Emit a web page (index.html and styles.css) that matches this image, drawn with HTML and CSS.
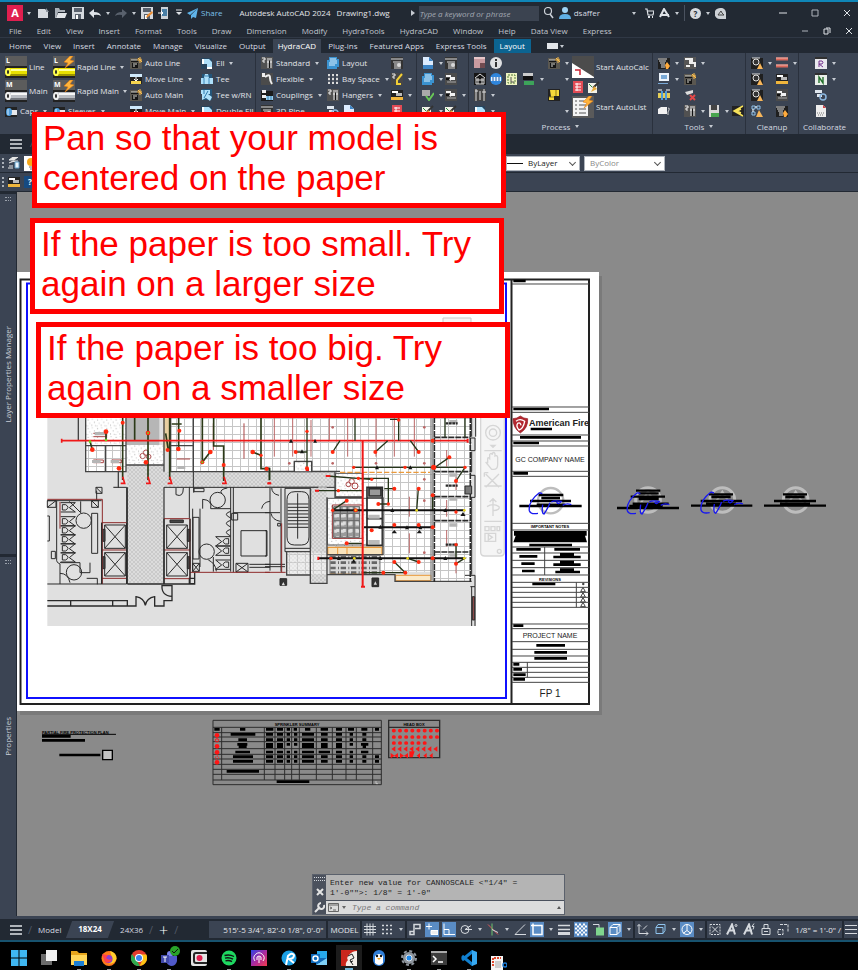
FILE: index.html
```html
<!DOCTYPE html>
<html lang="en">
<head>
<meta charset="utf-8">
<title>Autodesk AutoCAD 2024 - Drawing1.dwg</title>
<link rel="stylesheet" href="styles.css">
</head>
<body>
<svg class="sprite" aria-hidden="true">
  <symbol id="pipe-y" viewBox="0 0 22 22"><path fill="#5c5c5c" d="M0 0h22v12H0z"/><path fill="#222" d="M0 10h22v12H0z"/><path fill="#e8e000" d="M2 12h20v8H2z"/><path fill="#ffff9a" d="M6 13h16v2H6z"/><path fill="#9c9400" d="M5 18h17v2H5z"/><ellipse cx="3" cy="16" rx="3" ry="4" fill="#ffff50"/><ellipse cx="3" cy="16" rx="1" ry="2" fill="#222"/></symbol>
  <symbol id="pipe-w" viewBox="0 0 22 22"><path fill="#5c5c5c" d="M0 0h22v12H0z"/><path fill="#222" d="M0 10h22v12H0z"/><path fill="#b9bcc2" d="M2 12h20v8H2z"/><path fill="#f6f6f6" d="M6 13h16v2H6z"/><path fill="#74777e" d="M5 18h17v2H5z"/><ellipse cx="3" cy="16" rx="3" ry="4" fill="#eee"/><ellipse cx="3" cy="16" rx="1" ry="2" fill="#222"/></symbol>
  <symbol id="bolt" viewBox="0 0 22 22"><path d="M17 0L11 6l4 1-3 5 9-7-4-1 3-4z" fill="#ffb43c" stroke="#e07a10" stroke-width=".6"/></symbol>
  <symbol id="auto" viewBox="0 0 12 12"><path fill="#5a5750" d="M0 1h12v11H0z"/><path d="M1 3h7v2H1zM2 6h6v5H2z" fill="#151515"/><path d="M1 3h6M3 7h4M3 9h2" stroke="#d8d8d0"/><path d="M10 0v6M7 3h5M8 1l4 4" stroke="#ffc04c"/></symbol>
  <symbol id="move" viewBox="0 0 12 12"><path fill="#222" d="M0 1h12v10H0z"/><path fill="#cfe9fb" d="M0 1h12v3H0z"/><path fill="#f3d34e" d="M1 8h10v3H1z"/><path d="M6 4v4M4 6l2 2 2-2" stroke="#fff" fill="none"/></symbol>
  <symbol id="ell" viewBox="0 0 12 12"><path fill="#27455e" d="M0 1h11v11H0z"/><path fill="#aee0fa" d="M1 2h7l3 3v7H6V7H1z"/><path fill="#fff" d="M1 2h2v5H1zM6 10h5v2H6z"/></symbol>
  <symbol id="tee" viewBox="0 0 12 12"><path fill="#235579" d="M1 1h10v10H1z"/><path fill="#aee0fa" d="M0 5h3l1-4h3l1 4h4v6H0z"/><path d="M3 5v6M8 5v6M4 3h4" stroke="#3e87b8"/></symbol>
  <symbol id="teern" viewBox="0 0 12 12"><path fill="#235579" d="M1 0h10v11H1z"/><path fill="#aee0fa" d="M0 1h9v4H7l4 3-2 4-4-3-4 2V5H0z"/><path d="M3 1v4M7 2l-4 7" stroke="#2d78ab"/></symbol>
  <symbol id="fit" viewBox="0 0 12 12"><path fill="#515151" d="M0 0h12v12H0z"/><path d="M1 1h3v2H2v2h2M6 2h5M6 5h5M7 3v8M10 3v8" stroke="#f1f1f1" fill="none"/><path fill="#111" d="M8 4h1v7H8z"/></symbol>
  <symbol id="hose" viewBox="0 0 12 12"><path fill="#4b4b4b" d="M0 0h12v12H0z"/><path d="M1 1h3M1 3h3M4 4q5-4 5 1 0 3 2 6" stroke="#eee" fill="none" stroke-width="2"/></symbol>
  <symbol id="coup" viewBox="0 0 12 12"><path fill="#1b1b1b" d="M0 2h12v10H0z"/><path d="M1 1h4v3H1zM1 6h4v3H1z" fill="#eee"/><path fill="#9ad0f0" d="M5 7h7v4H5z"/><path d="M7 7v4M10 7v4" stroke="#367eae"/></symbol>
  <symbol id="cap" viewBox="0 0 12 12"><path fill="#222" d="M0 2h12v10H0z"/><path fill="#e7e9ec" d="M5 5h7v5H5z"/><ellipse cx="4" cy="7" rx="3" ry="4" fill="#4f9ddb"/><path d="M3 4v6" stroke="#d5ecff"/></symbol>
  <symbol id="sheet" viewBox="0 0 12 12"><path fill="#3a92d0" d="M2 0h8v2h2v8h-2v2H0V3h2z"/><path d="M3 2h6M3 4h7M2 6h8M2 8h6" stroke="#ddf1ff"/></symbol>
  <symbol id="bays" viewBox="0 0 12 12"><path d="M1 2h10M1 6h10M1 10h10" stroke="#f2f2f2" stroke-width="2" stroke-dasharray="2 2"/><path d="M2 1v10M6 1v10M10 1v10" stroke="#aaa" stroke-width=".6"/></symbol>
  <symbol id="grill" viewBox="0 0 12 12"><path fill="#333" d="M0 0h12v12H0z"/><path d="M0 2h12M2 5h8M3 7h7M3 9h7M3 11h7" stroke="#dedede"/><circle cx="8" cy="8" r="2" fill="#d8d8d8"/></symbol>
  <symbol id="page" viewBox="0 0 12 12"><path fill="#dcecff" d="M1 0h6l4 4v7H1z"/><path fill="#3d85c6" d="M7 0l4 4H7zM1 8h10v4H1z"/></symbol>
  <symbol id="duck" viewBox="0 0 12 12"><path fill="#4b4b4b" d="M0 0h12v12H0z"/><path fill="#f2f2f2" d="M1 2h5v2H1zM5 4h5v3H5z"/><path d="M2 9h9M3 5l3 3" stroke="#aaa"/><path fill="#111" d="M1 5h3v2H1z"/></symbol>
  <symbol id="sprk" viewBox="0 0 12 12"><path fill="#474747" d="M0 0h12v12H0z"/><path d="M1 1h3v2H2v2h2" stroke="#eee" fill="none"/><path d="M11 1L6 7v4h4" stroke="#f2cf36" stroke-width="2" fill="none"/></symbol>
  <symbol id="tape" viewBox="0 0 12 12"><path fill="#222" d="M0 1h12v10H0z"/><path fill="#fff" d="M1 2h6v2H1z"/><path fill="#f0b63c" d="M0 8h12v3H0z"/><path fill="#b9b9b9" d="M5 4h6v3H5z"/></symbol>
  <symbol id="check" viewBox="0 0 12 12"><path fill="#aaa" d="M0 1h8v6H0z"/><path d="M4 7l3 4 5-7" stroke="#68c657" stroke-width="2" fill="none"/></symbol>
  <symbol id="pink" viewBox="0 0 12 12"><path fill="#c99ba0" d="M0 0h11v11H0z"/><path fill="#704b50" d="M6 6h5v5H6z"/><path fill="#e6c6c9" d="M0 0h11v2H0z"/></symbol>
  <symbol id="info" viewBox="0 0 12 12"><circle cx="6" cy="6" r="6" fill="#dfe0e2"/><path d="M6 2v2M6 5v5" stroke="#333" stroke-width="2"/></symbol>
  <symbol id="home" viewBox="0 0 12 12"><path fill="#151515" d="M0 0h12v12H0z"/><path d="M1 5l5-4 5 4M2 5v6h8V5M2 7h8M4 5v6M8 5v6" stroke="#ddd" fill="none"/></symbol>
  <symbol id="n123" viewBox="0 0 12 12"><circle cx="6" cy="6" r="6" fill="#2f86dd"/><path fill="#e8f3ff" d="M1 4h10v4H1z"/><path d="M3 4v4M5 5h2M5 7h2M9 4v4" stroke="#1a58a3"/></symbol>
  <symbol id="plan" viewBox="0 0 12 12"><path fill="#eef3c0" d="M0 0h11v12H0z"/><path d="M2 2h7v8H2z" fill="none" stroke="#557c3a" stroke-dasharray="2 1"/><path d="M5 4v5h3" stroke="#555" fill="none"/></symbol>
  <symbol id="calc" viewBox="0 0 12 12"><path fill="#ccc" d="M1 0h10v3H1z"/><path fill="#111" d="M1 3h10v4H1z"/><path fill="#3da35a" d="M2 8h10v4H2z"/></symbol>
  <symbol id="tools2" viewBox="0 0 12 12"><path fill="#444" d="M0 0h12v12H0z"/><path d="M2 0v12M6 2v9M10 0v12M1 2h3M8 3h4" stroke="#ddd"/></symbol>
  <symbol id="tag" viewBox="0 0 12 12"><path fill="#222" d="M0 0h12v12H0z"/><path fill="#f4d83b" d="M2 1h9v6H6v4H1V8h2z"/><path d="M1 8h5M8 1v6" stroke="#8f7c12"/></symbol>
  <symbol id="redl" viewBox="0 0 12 12"><path fill="#e24b55" d="M1 0h10v12H1z"/><path d="M3 3h6M3 6h6M3 9h6M5 2v8" stroke="#fff"/></symbol>
  <symbol id="brush" viewBox="0 0 12 12"><path fill="#f2f2e8" d="M0 2h9v10H0z"/><path d="M11 1L5 7" stroke="#333" stroke-width="2"/><path fill="#e8ab3b" d="M6 5l3 3-6 3z"/><path d="M1 3l3 3" stroke="#2b8a3a"/></symbol>
  <symbol id="screen" viewBox="0 0 12 12"><path fill="#ecf3fa" d="M1 0h10v8H1z"/><path fill="#79a9d6" d="M3 2h6v4H3zM0 10h10v1H0z"/></symbol>
  <symbol id="flange" viewBox="0 0 12 12"><path fill="#e4ce55" d="M0 4h12v5H0z"/><path fill="#4c9bd8" d="M3 2h2v9H3zM7 2h2v9H7z"/><path d="M0 1h4M8 1h4" stroke="#fff"/></symbol>
  <symbol id="tap" viewBox="0 0 12 12"><path fill="#1f1f1f" d="M0 1h12v11H0z"/><path d="M0 2h9M1 4h7M2 6h5M3 8h4M3 10h4" stroke="#ddd" fill="none"/><path fill="#ffab3d" d="M7 8l2-3 3 4-2 3H8z"/></symbol>
  <symbol id="warn" viewBox="0 0 12 12"><path fill="#1f1f1f" d="M0 1h12v11H0z"/><circle cx="5" cy="5" r="3" fill="#333" stroke="#e2e2e2"/><path d="M1 1h8" stroke="#ddd"/><path fill="#f7b65b" d="M9 6l3 6H6z"/></symbol>
  <symbol id="zig" viewBox="0 0 12 12"><path fill="#555" d="M0 0h12v12H0z"/><path d="M1 2h5v4h5v4M8 1v4M2 9h4" stroke="#eee" fill="none" stroke-width="2"/></symbol>
  <symbol id="cross" viewBox="0 0 12 12"><path d="M1 3l8-2v3L3 6z" fill="#ddd"/><path d="M6 6l5 5M11 6l-5 5" stroke="#e54848" stroke-width="2"/></symbol>
  <symbol id="disk" viewBox="0 0 12 12"><path fill="#d8d8d8" d="M1 0h10v12H1z"/><path fill="#444" d="M3 0h6v5H3z"/><path fill="#47a44f" d="M3 8h8v4H3z"/></symbol>
  <symbol id="cube" viewBox="0 0 12 12"><path fill="#f2f2f2" d="M0 4l3-2h6v7H0z"/><path d="M10 3q2 0 1 2l-1 2v3" stroke="#ccc" fill="none"/></symbol>
  <symbol id="redpipes" viewBox="0 0 12 12"><path stroke="#d8675b" stroke-width="3" d="M0 2h12M0 9h12"/><path d="M0 1h12M0 8h12" stroke="#efb7ae"/></symbol>
  <symbol id="sheetr" viewBox="0 0 12 12"><path fill="#e9e9ee" d="M0 1h12v11H0z"/><path fill="#303030" d="M0 0h12v2H0z"/><path d="M4 10V4h3q2 1 0 3H4l4 3" stroke="#74328e" fill="none"/></symbol>
  <symbol id="sheetn" viewBox="0 0 12 12"><path fill="#e9eee9" d="M0 1h12v11H0z"/><path fill="#303030" d="M0 0h12v2H0z"/><path d="M4 10V4l4 6V4" stroke="#23712c" fill="none" stroke-width="1.4"/></symbol>
  <symbol id="gears" viewBox="0 0 12 12"><path fill="#dfe6ee" d="M0 1h7v3H0zM2 5h5v3H2z"/><circle cx="8" cy="8" r="3" fill="none" stroke="#8ab6df" stroke-width="1.5"/></symbol>
  <symbol id="boxes" viewBox="0 0 12 12"><path d="M1 1h3v3H1zM6 1h3v3H6zM1 7h3v3H1z" fill="none" stroke="#8fc0ea"/><path d="M4 2h2M2 4v3" stroke="#fff"/><path fill="#f7b65b" d="M8 5l4 7H5z"/></symbol>
  <symbol id="pdf" viewBox="0 0 12 12"><path fill="#ededed" d="M1 0h7l3 3v9H1z"/><path fill="#d33f45" d="M8 0l3 3H8z"/><path d="M2 8h8M3 10h6" stroke="#777" stroke-dasharray="1 1"/></symbol>
  <symbol id="wave" viewBox="0 0 12 12"><path fill="#222" d="M0 1h12v10H0z"/><path d="M11 1L2 6l9 5M9 4L5 6l4 2" fill="none" stroke="#f6e25a" stroke-width="1.5"/></symbol>
  <symbol id="bars" viewBox="0 0 12 10"><path d="M0 1h12M0 5h12M0 9h12" stroke="#dfe3e8" stroke-width="1.4"/></symbol>
  <symbol id="floppy" viewBox="0 0 12 12"><path fill="#d5d9de" d="M0 0h12v12H0z"/><path fill="#59616d" d="M2 1h8v4H2zM3 7h6v5H3z"/><path fill="#fff" d="M4 8h2v4H4z"/></symbol>
</svg>

<header class="titlebar">
  <button class="applogo" aria-label="Application menu">A</button>
  <i class="caret"></i>
  <nav class="quick">
    <svg width="12" height="12" viewBox="0 0 12 12"><path d="M0 2h7l3 3v6H0z" fill="#d5d9de"/><path d="M8 1l3 4H8z" fill="#9097a0"/></svg>
    <svg width="12" height="12" viewBox="0 0 12 12"><path d="M0 1h4l1 2h5v2H3L1 11H0z" fill="#aab0b8"/><path d="M3 6h9l-2 5H1z" fill="#e3e6ea"/></svg>
    <svg width="12" height="12"><use href="#floppy"/></svg>
    <svg width="12" height="12" viewBox="0 0 12 12"><path d="M0 6l5-4v3q6 0 7 4-3-2-7-1v3z" fill="#dfe3e8"/></svg>
    <i class="caret"></i>
    <svg width="12" height="12" viewBox="0 0 12 12"><path d="M12 6L7 2v3Q1 5 0 9q3-2 7-1v3z" fill="#59616d"/></svg>
    <i class="caret"></i>
    <svg width="12" height="12" viewBox="0 0 12 12"><use href="#floppy"/><path d="M5 11l1-3 5-4 1 2-5 4z" fill="#ed8f35"/></svg>
    <svg width="12" height="12" viewBox="0 0 12 12"><path d="M3 0h7v12H3z" fill="#ccd1d7"/><path d="M4 2h5v7H4z" fill="#4a7fa6"/><path d="M0 6h5M3 4l2 2-2 2" stroke="#fff" fill="none"/></svg>
    <svg width="8" height="8" viewBox="0 0 8 8"><path d="M1 1h6" stroke="#dfe3e8"/><path d="M1 3h6L4 6z" fill="#dfe3e8"/></svg>
  </nav>
  <a class="share" href="#"><svg width="11" height="11" viewBox="0 0 11 11"><path d="M11 0L0 5l3 2zM11 0L4 7v4l2-2 3 1z" fill="#5fb4ea"/></svg>Share</a>
  <h1>Autodesk AutoCAD 2024 <span>Drawing1.dwg</span></h1>
  <i class="play"></i>
  <input class="search" type="search" aria-label="Search help" placeholder="Type a keyword or phrase">
  <svg width="11" height="12" viewBox="0 0 11 12"><circle cx="5" cy="4" r="3.5" fill="none" stroke="#cdd2d9" stroke-width="1.2"/><path d="M7 7l3 4" stroke="#cdd2d9" stroke-width="1.6"/></svg>
  <button class="user"><svg width="12" height="12" viewBox="0 0 12 12"><circle cx="6" cy="3" r="3" fill="#9fd3f5"/><path d="M0 12q0-5 6-5t6 5z" fill="#5fb0e6"/></svg>dsaffer</button>
  <i class="caret"></i>
  <div class="help">
    <svg width="9" height="11" viewBox="0 0 9 11"><path d="M0 1h2l1 6h5l1-4H2" fill="none" stroke="#dfe3e8" stroke-width="1.2"/><path d="M3 9h2M7 9h1" stroke="#dfe3e8" stroke-width="2"/></svg>
    <svg width="11" height="11" viewBox="0 0 11 11"><path d="M1 9L5 1l5 8M1 7h9" fill="none" stroke="#dfe3e8" stroke-width="2"/></svg>
    <i class="caret"></i>
    <i class="rule"></i>
    <button class="round" aria-label="Help">?</button>
    <i class="caret"></i>
    <svg width="11" height="11" viewBox="0 0 11 11"><path d="M5 0a5 5 0 0 1 6 5v6H5A5 5 0 0 1 5 0z" fill="#cdd1d6"/><path d="M3 7l3-4 1 2 2 2z" fill="none" stroke="#444"/></svg>
  </div>
  <div class="winbtns">
    <button aria-label="Minimize"><svg width="8" height="8"><path d="M0 4h8" stroke="#dfe3e8"/></svg></button>
    <button aria-label="Maximize"><svg width="8" height="8"><path d="M1 1h6v6H1z" stroke="#aeb4bc" fill="none"/></svg></button>
    <button aria-label="Close"><svg width="8" height="8"><path d="M1 1l6 6M7 1L1 7" stroke="#dfe3e8"/></svg></button>
  </div>
</header>

<div class="menubar">
  <nav class="menu"><a>File</a><a>Edit</a><a>View</a><a>Insert</a><a>Format</a><a>Tools</a><a>Draw</a><a>Dimension</a><a>Modify</a><a>HydraTools</a><a>HydraCAD</a><a>Window</a><a>Help</a><a>Data View</a><a>Express</a></nav>
  <div class="winbtns inner">
    <button aria-label="Minimize drawing"><svg width="8" height="8"><path d="M1 4h6" stroke="#aeb4bc"/></svg></button>
    <button aria-label="Restore drawing"><svg width="8" height="8"><path d="M1 2h4v5H1zM3 1h4v5" stroke="#dfe3e8" fill="none"/></svg></button>
    <button aria-label="Close drawing"><svg width="8" height="8"><path d="M1 1l6 6M7 1L1 7" stroke="#dfe3e8"/></svg></button>
  </div>
</div>

<nav class="tabs"><a>Home</a><a>View</a><a>Insert</a><a>Annotate</a><a>Manage</a><a>Visualize</a><a>Output</a><a class="on">HydraCAD</a><a>Plug-ins</a><a>Featured Apps</a><a>Express Tools</a><a class="ctx">Layout</a><span class="mini"></span><i class="caret"></i></nav>

<section class="ribbon">
  <div class="panel p1">
    <div class="cols">
      <div class="col">
        <button class="tool big"><svg width="22" height="22"><use href="#pipe-y"/><text x="1" y="7">L</text></svg>Line</button>
        <button class="tool big"><svg width="22" height="22"><use href="#pipe-w"/><text x="1" y="7">M</text></svg>Main</button>
        <button class="tool"><svg><use href="#cap"/></svg>Caps<i class="caret"></i></button>
      </div>
      <div class="col">
        <button class="tool big"><svg width="22" height="22"><use href="#pipe-y"/><use href="#bolt"/><text x="1" y="7">L</text></svg>Rapid Line<i class="caret"></i></button>
        <button class="tool big"><svg width="22" height="22"><use href="#pipe-w"/><use href="#bolt"/><text x="1" y="7">M</text></svg>Rapid Main<i class="caret"></i></button>
        <button class="tool"><svg><use href="#cap"/></svg>Sleeves<i class="caret"></i></button>
      </div>
      <div class="col">
        <button class="tool"><svg><use href="#auto"/></svg>Auto Line</button>
        <button class="tool"><svg><use href="#move"/></svg>Move Line<i class="caret"></i></button>
        <button class="tool"><svg><use href="#auto"/></svg>Auto Main</button>
        <button class="tool"><svg><use href="#move"/></svg>Move Main<i class="caret"></i></button>
      </div>
      <div class="col">
        <button class="tool"><svg><use href="#ell"/></svg>Ell<i class="caret"></i></button>
        <button class="tool"><svg><use href="#tee"/></svg>Tee</button>
        <button class="tool"><svg><use href="#teern"/></svg>Tee w/RN</button>
        <button class="tool"><svg><use href="#ell"/></svg>Double Ell</button>
      </div>
    </div>
  </div>
  <div class="panel p2">
    <div class="cols">
      <div class="col">
        <button class="tool"><svg><use href="#fit"/></svg>Standard<i class="caret"></i></button>
        <button class="tool"><svg><use href="#hose"/></svg>Flexible<i class="caret"></i></button>
        <button class="tool"><svg><use href="#coup"/></svg>Couplings<i class="caret"></i></button>
        <button class="tool"><svg><use href="#grill"/></svg>3D Pipe</button>
      </div>
      <div class="col">
        <button class="tool"><svg><use href="#sheet"/></svg>Layout</button>
        <button class="tool"><svg><use href="#bays"/></svg>Bay Space<i class="caret"></i></button>
        <button class="tool"><svg><use href="#fit"/></svg>Hangers<i class="caret"></i></button>
        <button class="tool wide"><svg><use href="#gears"/></svg><svg><use href="#page"/></svg></button>
      </div>
      <div class="col">
        <button class="tool"><svg><use href="#grill"/></svg></button>
        <button class="tool"><svg><use href="#sprk"/></svg><i class="caret"></i></button>
        <button class="tool"><svg><use href="#tape"/></svg><i class="caret"></i></button>
        <button class="tool"><svg><use href="#redl"/></svg></button>
      </div>
    </div>
  </div>
  <div class="panel p3">
    <div class="cols">
      <div class="col">
        <button class="tool"><svg><use href="#page"/></svg><i class="caret"></i></button>
        <button class="tool"><svg><use href="#sheet"/></svg><i class="caret"></i></button>
        <button class="tool"><svg><use href="#check"/></svg><i class="caret"></i></button>
        <button class="tool"><svg><use href="#brush"/></svg><i class="caret"></i></button>
      </div>
      <div class="col">
        <button class="tool"><svg><use href="#grill"/></svg></button>
        <button class="tool"><svg><use href="#duck"/></svg></button>
        <button class="tool"><svg><use href="#duck"/></svg><i class="caret"></i></button>
        <button class="tool"><svg><use href="#brush"/></svg></button>
      </div>
    </div>
  </div>
  <div class="panel p4">
    <div class="cols">
      <div class="col">
        <div class="tool wide"><svg><use href="#pink"/></svg><svg><use href="#info"/></svg></div>
        <div class="tool wide"><svg><use href="#home"/></svg><svg><use href="#n123"/></svg><svg><use href="#plan"/></svg><svg><use href="#calc"/></svg><i class="caret"></i></div>
        <div class="tool"><svg><use href="#tools2"/></svg><i class="caret"></i></div>
        <div class="tool"><svg><use href="#ell"/></svg><i class="caret"></i></div>
      </div>
      <div class="col">
        <div class="tool"><svg><use href="#auto"/></svg><i class="caret"></i></div>
        <div class="tool inset"><i class="caret"></i></div>
        <div class="tool"><svg><use href="#tag"/></svg></div>
        <div class="tool inset"><i class="caret"></i></div>
      </div>
      <div class="col">
        <button class="tool big"><svg width="22" height="22" viewBox="0 0 22 22"><path fill="#fff" d="M0 0h22v22H0z"/><path d="M0 0h22v21L0 7z" fill="#4c4c4c"/><path d="M3 14h5v5" stroke="#c23" stroke-width="1.500" fill="none"/></svg>Start AutoCalc</button>
        <div class="tool wide"><svg><use href="#redl"/></svg><svg><use href="#brush"/></svg></div>
        <button class="tool big"><svg width="22" height="22" viewBox="0 0 22 22"><path fill="#5a5a5a" d="M0 0h22v22H0z"/><path fill="#f4f4f4" d="M1 2h15v18H1z"/><path d="M3 5h2M7 5h5M3 9h2M7 9h7M3 13h2M7 13h7M3 17h2M7 17h7" stroke="#555"/><use href="#bolt"/></svg>Start AutoList</button>
      </div>
    </div>
    <h2>Process<i class="caret"></i></h2>
  </div>
  <div class="panel p5">
    <div class="cols">
      <div class="col">
        <div class="tool"><svg><use href="#tap"/></svg><i class="caret"></i></div>
        <div class="tool"><svg><use href="#screen"/></svg><i class="caret"></i></div>
        <div class="tool"><svg><use href="#flange"/></svg></div>
        <div class="tool"><svg><use href="#cube"/></svg></div>
      </div>
      <div class="col">
        <div class="tool"><svg><use href="#zig"/></svg><i class="caret"></i></div>
        <div class="tool"><svg><use href="#auto"/></svg></div>
        <div class="tool"><svg><use href="#cross"/></svg></div>
        <div class="tool"><svg><use href="#fit"/></svg><i class="caret"></i><svg><use href="#disk"/></svg><i class="caret"></i><svg><use href="#wave"/></svg></div>
      </div>
    </div>
    <h2>Tools<i class="caret"></i></h2>
  </div>
  <div class="panel p6">
    <div class="cols">
      <div class="col">
        <div class="tool"><svg><use href="#warn"/></svg><i class="caret"></i></div>
        <div class="tool"><svg><use href="#warn"/></svg></div>
        <div class="tool"><svg><use href="#warn"/></svg></div>
        <div class="tool"><svg><use href="#boxes"/></svg></div>
      </div>
      <div class="col">
        <div class="tool"><svg><use href="#redpipes"/></svg><i class="caret"></i></div>
        <div class="tool"><svg><use href="#tape"/></svg></div>
        <div class="tool"><svg><use href="#duck"/></svg></div>
        <div class="tool"><svg><use href="#tap"/></svg></div>
      </div>
    </div>
    <h2>Cleanup</h2>
  </div>
  <div class="panel p7">
    <div class="cols">
      <div class="col">
        <div class="tool"><svg><use href="#sheetr"/></svg><i class="caret"></i></div>
        <div class="tool"><svg><use href="#sheetn"/></svg><i class="caret"></i></div>
        <div class="tool"><svg><use href="#gears"/></svg></div>
        <div class="tool"><svg><use href="#pdf"/></svg></div>
      </div>
    </div>
    <h2>Collaborate</h2>
  </div>
</section>

<div class="filetabs"><svg width="12" height="10"><use href="#bars"/></svg><span>/</span></div>
<div class="toolrow">
  <i class="grip"></i><svg width="12" height="12" viewBox="0 0 12 12"><path d="M1 3l4-3h5L6 3zM1 6l4-2h5M1 9h4M0 11h5" fill="#e5e5e5" stroke="#e5e5e5"/><path fill="#e9f4fc" stroke="#5f9cc4" d="M7 5h4v6H7z"/></svg>
  <div class="layerbox"><svg width="14" height="14" viewBox="0 0 14 14"><circle cx="7" cy="6" r="4" fill="#f6a81a"/><path d="M5 11h4M6 13h2" stroke="#666"/></svg></div>
  <label class="pick line"><span></span><select aria-label="Linetype"><option>ByLayer</option></select></label>
  <label class="pick off"><select aria-label="Plot style"><option>ByColor</option></select></label>
</div>
<div class="toolrow">
  <i class="grip"></i><svg width="12" height="12"><use href="#tape"/></svg><span class="q">?</span>
</div>

<main class="work">
  <aside class="palettes">
    <div class="palette"><i class="dots"></i><span>Layer Properties Manager</span></div>
    <div class="palette"><i class="dots"></i><span>Properties</span></div>
  </aside>
  <div class="canvas">
    <svg class="drawing" viewBox="17 192 841 725" width="841" height="725" role="img" aria-label="Fire protection plan on a layout sheet">
      <defs>
        <pattern id="ceil" width="24" height="24" patternUnits="userSpaceOnUse"><path fill="#fff" d="M0 0h24v24H0z"/><path d="M1.500 0v24M0 1.500h24" stroke="#c6c6c6" stroke-width="3"/></pattern>
        <pattern id="hatch" width="12" height="12" patternUnits="userSpaceOnUse"><path fill="#dcdcdc" d="M0 0h12v12H0z"/><path d="M0 6l6-6M6 12l6-6M0 6l6 6M6 0l6 6" stroke="#b8b8b8" stroke-width="1.500" fill="none"/></pattern>
        <pattern id="speck" width="28" height="26" patternUnits="userSpaceOnUse"><path fill="#fff" d="M0 0h28v26H0z"/><path d="M3 4h3M16 2h2M22 11h3M8 14h2M14 20h3M2 22h2M25 21h2" stroke="#888" stroke-width="2"/></pattern>
        <g id="stall"><path d="M0 0h44L26 15 44 28H0M5 6h10q14 8 0 16H5z" fill="none"/></g>
        <g id="lift"><path d="M0 0h62v70H0zM0 0l62 70M62 0L0 70" fill="none"/></g>
        <g id="sealring"><circle r="37" fill="none" stroke="#bdbdbd" stroke-width="9"/><path d="M-22 10L0-25 22 10z" fill="none" stroke="#bdbdbd" stroke-width="6"/></g>
        <path id="sig" d="M0 0q-34 26-30 54 4 12 26 8M0 0l9 3M10 36q-4 28 4 28 10-14 18-34M36 28q8-6 30-2-10 12-14 2M70 38q12-8 26-2" fill="none" stroke="#1818f0" stroke-width="4"/>
      </defs>
      <path class="shade" d="M20 276h582v439H20z"/>
      <path fill="#fff" d="M17 272h582v439H17z"/>
      <path d="M20.500 279.500h568.500v424.500H20.500zM511.500 279.500V704" fill="none" stroke="#222" stroke-width="2"/>
      <path d="M27 283.500h479V698H27z" fill="none" stroke="#1010ff" stroke-width="2"/>
      <path d="M443 318h28v8h-28z" fill="#f6f6f6" stroke="#c9c9c9"/>

      <g transform="translate(40 410) scale(.33333)" stroke-width="3" stroke="#2a2a2a" fill="none">
        <path d="M22 0h1286v648H22z" fill="#e0e0e0" stroke="none"/>
        <g stroke="none">
          <path fill="url(#speck)" d="M137 0h121v107H137zM258 105h114v60H258z"/>
          <path fill="url(#ceil)" d="M137 107h121v78H137zM392 0h66v185h-66zM462 0h721v185H462zM885 185h298v300H885zM1183 0h112v515h-112z"/>
          <path fill="#b6b6b6" d="M260 0h98v105h-98z"/>
          <path fill="url(#hatch)" d="M262 165h110v357H262zM372 185h513v47H372z"/>
          <path fill="#e8cfa0" d="M370 0h18v122h-18z"/>
        </g>
        <path d="M115 0v92M137 0v185h121V0M137 107h121M197 107v78M235 185v47h-15M258 165h114M372 0v185M392 0v185h68V0M392 107h68M460 185h425M262 232v290M372 232v290" stroke-width="4" stroke="#444"/>
        <path d="M372 232h76v92M235 232h25v108M170 272v-30M168 232h18v18h-18zl18 18M447 232h14v16M460 232h425M460 185v47M572 232V485M580 232v255M580 308h110M690 232v250M575 310h18v20h-18z"/>
        <path d="M408 234v20q22 10 22-20M488 296v-28q30 2 24 28h60M562 234q-24 4-18 16M665 296q4-20 25-22"/>
        <path d="M22 272h163M50 272v180q0 6 10 10v60M22 272h26v20H22zm0 20l26-20M155 272h20v20h-20zl20 20M22 318h6v75h-6M34 424h12v22H34zM60 458h60M155 310h18v120h-18zM120 458v30h30v-30M22 522h238M140 505h32v18M60 490q24 0 30 28M88 274l34 34V274"/>
        <path d="M22 572h240v16H22M92 572v14M218 572v14M258 588h30v-28q24 4 28 26 4-22 28-26v28h28v-16h24v-45h-30q-2 30 30 32M262 522h202v-35M448 505h16v16h-16z" stroke-width="4"/>
        <use href="#stall" x="62" y="320"/><use href="#stall" x="62" y="347"/><use href="#stall" x="62" y="374"/><use href="#stall" x="62" y="401"/><use href="#stall" x="62" y="428"/><use href="#stall" x="62" y="278"/>
        <g transform="translate(1096 0) scale(-1 1)"><use href="#stall" x="525" y="380"/><use href="#stall" x="525" y="408"/><use href="#stall" x="525" y="450"/></g>
        <path d="M572 304q-26 8 0 20M572 331q-26 8 0 20M572 358q-26 8 0 20M459 322h18v125h-18zM458 296v190M480 296v175M505 450q22 10 24 34M458 460h20v24h-20zl20 24m0-24l-20 24M588 460h36v26h-36zl36 26m0-26l-36 26M628 463h62M628 472h62M462 235h30v10h-30zM520 485v-44"/>
        <circle cx="131" cy="332" r="23"/><circle cx="102" cy="487" r="23"/><circle cx="533" cy="270" r="23"/><circle cx="500" cy="425" r="23"/>
        <path d="M603 362h78v76h-78z"/>
        <use href="#lift" x="194" y="345"/><use href="#lift" x="194" y="428"/><use href="#lift" x="380" y="345"/><use href="#lift" x="380" y="428"/>
        <path d="M187 358h8v36h-8zM187 440h8v36h-8zM442 358h8v36h-8zM442 440h8v36h-8zM390 330h40v8h-40z" fill="#444"/>
        <path d="M22 268h165v254M185 338h75M185 420h75M185 505h75M372 326h78v180h-78M372 420h78M450 487h240M60 276v80" stroke="#8e2a2a"/>
        <path d="M185 338v184M450 326v196M260 338v184M372 326v196" stroke-width="4"/>
        <path d="M410 147h40M520 40v80M612 40v106M160 70h40v10h-40M160 150h30v8h-30M215 150h30v8h-30" stroke="#a44"/>
        <path d="M164 66h36v10h-36zM156 150h26v9h-26zM212 150h26v9h-26zM412 168h24v9h-24z" fill="#b5b5b5" stroke="none"/>
        <g stroke="#b05555"><circle cx="318" cy="128" r="8"/><circle cx="308" cy="138" r="8"/><circle cx="326" cy="140" r="7"/></g>
        <path d="M248 20v190M324 20v190M389 20v190M487 20v137l24-32M521 20v88h30v105M663 20v116l-25-10M663 136v40h25v35M284 20v70M416 20v98M198 62v30M150 94l7 25M395 42h30M385 120l-8-50" stroke="#2c3a18" stroke-width="5"/>
        <path d="M65 92h1218M65 86v12M242 220h12l-6-20M318 220h12l-6-20M383 220h12l-6-20M546 220h12l-6-20M682 220h12" stroke="#f01818" stroke-width="5"/>
        <g fill="#ff2a10" stroke="none"><circle cx="198" cy="65" r="7"/><circle cx="157" cy="119" r="7"/><circle cx="248" cy="38" r="6"/><circle cx="324" cy="69" r="7"/><circle cx="237" cy="175" r="7"/><circle cx="418" cy="62" r="6"/><circle cx="415" cy="117" r="7"/><circle cx="511" cy="126" r="7"/><circle cx="487" cy="157" r="6"/><circle cx="551" cy="165" r="6"/><circle cx="638" cy="126" r="7"/><circle cx="663" cy="136" r="5"/><circle cx="680" cy="176" r="6"/><circle cx="318" cy="157" r="7"/><circle cx="383" cy="120" r="6"/></g>
        <g fill="#6bd41c" stroke="none"><circle cx="198" cy="90" r="4"/><circle cx="150" cy="95" r="4"/><circle cx="487" cy="157" r="3"/><circle cx="324" cy="69" r="3"/></g>
      </g>

      <g transform="translate(265 410) scale(.33333)" stroke-width="3" stroke="#2a2a2a" fill="none">
        <path d="M634 0h12v650h-12z" fill="#fff" stroke="none"/>
        <path d="M88 155h52v30H88zM212 190h82v70h-82zM187 265h120v140H187z" fill="url(#speck)" stroke="#555"/>
        <path d="M135 232h50v290h-50zM65 425h70v68H65z" fill="url(#hatch)" stroke="none"/>
        <path d="M66 428h118v64H66z" fill="url(#ceil)" opacity=".5" stroke="none"/>
        <path d="M60 235h77v180H60zM90 245h20q22 0 22 24v112q0 24-22 24H88q-22 0-22-24V269q0-24 24-24zM98 250v136M68 282h62M68 292h62M68 302h62M68 312h62M68 322h62M68 332h62M68 342h62M68 352h62M60 415v10h77M0 308h45M48 235v250M20 232q0 20 22 24M18 310q4 20 28 24M38 340h8v8h-8zM0 362h4v76H0M0 463h60M0 470h60"/>
        <path d="M0 487h62M50 340v147M202 285h90v100h-90z" stroke="#8e2a2a"/>
        <path d="M206 290h78v92h-78z" fill="#9b9b9b" stroke="none"/>
        <path d="M218 290v92M238 290v92M258 290v92M276 290v92M206 318h78M206 342h78M206 364h78" stroke="#ddd" stroke-width="9" stroke-dasharray="10 12"/>
        <path d="M206 290h78v92h-78zM226 290v92M247 290v92M267 290v92M206 310h78M206 332h78M206 354h78" stroke="#666"/>
        <path d="M306 232h46v174h-46zM308 264h44M308 326h44" stroke-width="5" fill="#fff"/><path d="M312 236h36v22h-36z" fill="#999" stroke-width="5"/><path d="M310 314h34v12h-34zM310 390h34v12h-34z" fill="#bbb" stroke="none"/>
        <path d="M188 412h163v22H188z" fill="#f7e3bd" stroke="#ea9a3c" stroke-width="4"/><path d="M218 412v22M246 412v22" stroke="#ea9a3c"/>
        <path d="M195 436h150v56H195z" fill="#d9d9d9" stroke="#777"/><path d="M196 442h148M196 458h148M196 474h148M196 488h148" stroke="#666" stroke-width="8" stroke-dasharray="16 7 3 5"/>
        <path d="M392 496h106v16H392z" fill="#fbe9c8" stroke="#ea9a3c"/>
        <path d="M225 187h270M195 493h96" stroke="#ea9a3c" stroke-width="4" stroke-dasharray="16 6"/>
        <path d="M0 184h88v-30h52v30h85M210 186v76h84M186 262v258h-50V232M65 425v70h70M186 434h168M186 494h204v20h230M0 232h160M354 262v174" stroke-width="4" stroke="#444"/>
        <path d="M508 0v515M616 0v515M508 82h108M508 185h112M508 260h108M508 332h108M508 426h108" stroke-width="5" stroke-dasharray="18 3"/>
        <path d="M498 0v510M504 0v510" stroke="#888" stroke-width="4"/>
        <path d="M620 0v80M632 0v80M616 84h14v38h-14zM620 125v60M616 196h14v66h-14M620 262v232M600 496h30v34h-14M620 530v118M630 530v118" />
        <path d="M622 560h7v70h-7z" fill="#8e4a4a"/>
        <path d="M600 228h20v24h-20z" fill="#777"/><path d="M45 506h20v20H45zM321 504h20v26h-20z" fill="#333"/><path d="M50 526l5-10 5 10zM326 524l5-10 5 10z" fill="#ddd" stroke="none"/>
        <path d="M28 20v120M83 20v120M138 30v110M193 20v70M248 20v120M333 20v120M388 20v120M448 20v120M433 260v60M433 370v60M545 360v50M573 200v40M545 120v50M573 440v50M545 270v50" stroke="#b66"/>
        <path d="M553 30h24v10h-24zM553 190h24v10h-24zM553 262h24v10h-24zM553 340h24v10h-24zM553 430h24v10h-24z" fill="#b5b5b5" stroke="none"/>
        <path d="M542 40h36M542 227h36M542 404h36" stroke-width="7" stroke-dasharray="8 2"/>
        <g stroke="#a44"><circle cx="260" cy="214" r="8"/><circle cx="250" cy="223" r="7"/><circle cx="270" cy="228" r="9"/></g>
        <path d="M126 20v155M92 126h34M0 175h14v35M270 20v72M401 20v72M375 28h26M225 92l-22 34M368 92l-37 34M436 92l25 34M266 172h334M553 142l-46 32M600 172l-27 41M540 20v62M600 20v62M186 198l130 10M152 242h140M280 205h90v77h-30M245 272l-42 28M460 236l-5 65M245 400h48M388 456l33 32M428 445l33 11M573 405v40l26 0-26 16M293 488h128M388 236h-30M503 256v44" stroke="#26351a" stroke-width="4"/>
        <path d="M203 301h397M297 352h206M160 445h440" stroke="#111" stroke-width="6"/>
        <path d="M293 92v438M288 530h12M608 86v12M182 198h14M150 242h12M160 440v10M122 180h10M8 220h10" stroke="#f01818" stroke-width="6"/>
        <g fill="#151515" stroke="none"><path d="M72 98l6-12 6 12zM145 98l5-12 6 12zM330 178l6-12 6 12zM430 178l6-12 6 12zM340 356l6-12 6 12zM420 358l6-12 6 12zM460 358l6-12 6 12zM376 306l6-12 6 12zM535 306l6-12 6 12zM260 458l6-12 6 12zM380 370l8-10 8 10zM455 370l8-10 8 10zM586 318l8-12 8 12zM535 450l6-12 6 12zM216 450l6-12 6 12zM340 450l6-12 6 12zM105 130l6-12 6 12z"/></g>
        <g fill="#ff2a10" stroke="none"><circle cx="92" cy="126" r="6"/><circle cx="126" cy="64" r="5"/><circle cx="126" cy="175" r="6"/><circle cx="5" cy="176" r="6"/><circle cx="203" cy="126" r="6"/><circle cx="331" cy="126" r="6"/><circle cx="461" cy="126" r="6"/><circle cx="401" cy="30" r="5"/><circle cx="266" cy="172" r="5"/><circle cx="420" cy="172" r="5"/><circle cx="503" cy="92" r="6"/><circle cx="506" cy="172" r="8"/><circle cx="553" cy="142" r="6"/><circle cx="600" cy="172" r="5"/><circle cx="573" cy="213" r="6"/><circle cx="220" cy="242" r="5"/><circle cx="280" cy="205" r="5"/><circle cx="320" cy="208" r="5"/><circle cx="388" cy="236" r="6"/><circle cx="461" cy="236" r="6"/><circle cx="503" cy="256" r="6"/><circle cx="245" cy="272" r="6"/><circle cx="203" cy="301" r="5"/><circle cx="272" cy="301" r="6"/><circle cx="340" cy="282" r="6"/><circle cx="370" cy="282" r="5"/><circle cx="573" cy="306" r="5"/><circle cx="388" cy="345" r="6"/><circle cx="461" cy="345" r="6"/><circle cx="503" cy="352" r="6"/><circle cx="320" cy="361" r="6"/><circle cx="245" cy="400" r="6"/><circle cx="573" cy="404" r="5"/><circle cx="198" cy="445" r="5"/><circle cx="503" cy="445" r="6"/><circle cx="388" cy="456" r="6"/><circle cx="461" cy="456" r="6"/><circle cx="573" cy="461" r="6"/><circle cx="421" cy="488" r="6"/><circle cx="355" cy="488" r="6"/></g>
        <g fill="#e9d51c" stroke="none"><circle cx="455" cy="301" r="4"/><circle cx="272" cy="301" r="3"/><circle cx="598" cy="301" r="4"/><circle cx="428" cy="445" r="4"/><circle cx="268" cy="445" r="4"/><circle cx="598" cy="445" r="4"/></g>
        <g fill="#b66" stroke="none"><circle cx="203" cy="52" r="4"/><circle cx="478" cy="52" r="4"/><circle cx="73" cy="160" r="4"/><circle cx="203" cy="160" r="4"/><circle cx="333" cy="160" r="4"/><circle cx="478" cy="160" r="4"/><circle cx="478" cy="208" r="4"/><circle cx="478" cy="272" r="4"/><circle cx="478" cy="428" r="4"/></g>
        <g stroke="#d6d6d6" stroke-width="4"><path d="M647 0h71v426q0 12-12 12h-47q-12 0-12-12z" fill="#f5f5f5"/><circle cx="684" cy="68" r="22"/><circle cx="684" cy="68" r="11"/><path d="M658 122h52M658 228h52M658 334h52M668 160v-14q0-6 6 0v-12q4-8 8 0v-4q6-6 8 2v6q6-4 8 4v22q0 14-12 14h-6l-18-22M662 192l40 40M702 192l-40 40M658 188h12M658 188v12M684 268v50M674 276l10-10 10 10M666 290q18-12 36 0 4 10-18 12M660 350h12v12h-12zM678 350h12v12h-12zM696 350h8v12h-8zM660 370h32v24h-32zM670 374l12 8-12 8zM678 106h12l-6 6z"/><circle cx="703" cy="424" r="6"/></g>
      </g>

      <g transform="translate(500 270) scale(.33333)" stroke="#444" stroke-width="3" fill="none">
        <path d="M36 42h232M36 411h232M36 427h232M36 495h232M36 513h232M36 528h232M36 604h232M36 619h232M36 760h232M36 780h232M36 831h232M36 849h232M36 871h232M36 893h232M36 915h232M36 937h232M36 952h232M36 967h232M36 982h232M36 997h232M36 1012h232M36 1062h232M36 1076h232M36 1115h232M36 1138h232M36 1158h232M36 1177h232M36 1192h232M36 1207h232M36 1222h232M36 1237h232M134 831v84M229 937v75M82 1177v45"/>
        <path d="M40 33h37M40 417h107M92 477h64M60 502h183M40 519h77M40 610h44M88 825h128M49 838h73M163 838h77M58 859h54M180 853h42M160 861h82M64 881h40M180 876h42M160 884h82M66 903h38M180 899h42M166 906h74M97 942h69M40 1067h30M109 1126h86M103 1147h98M103 1165h98M40 1183h18M40 1198h26M40 1214h37M40 1228h35" stroke="#000" stroke-width="8"/>
        <path d="M42 783h218v14h-5l6 20H40l7-20h-5z" fill="#000" stroke="none"/>
        <circle cx="152" cy="692" r="38" stroke="#bdbdbd" stroke-width="7"/>
        <path d="M116 675h74M124 684h56M90 693h123M110 704h86M58 708h187" stroke="#000" stroke-width="7"/>
        <use href="#sig" x="118" y="668"/>
        <g stroke-width="3"><path d="M242 965l7-13 7 13zM242 981l7-13 7 13zM242 996l7-13 7 13zM242 1010l7-13 7 13z"/><path d="M248 940h4v4h-4z" fill="#111"/></g>
        <path d="M61 438q10 8 22 8 2 28-22 43-22-15-22-43 12 0 22-8z" fill="#b3262e" stroke="#8e1a22" stroke-width="2"/><path d="M48 454q12-10 26 0-4 22-17 26-10-12-4-20 8-4 10 6" stroke="#fff" stroke-width="4"/>
      </g>
      <g class="blocktext">
        <text x="529" y="426" class="brand">American Fire</text>
        <text x="550" y="462" class="t8">GC COMPANY NAME</text>
        <text x="550" y="528" class="t5">IMPORTANT NOTES</text>
        <text x="550" y="581" class="t5">REVISIONS</text>
        <text x="550" y="638" class="t8">PROJECT NAME</text>
        <text x="550" y="697" class="t11">FP 1</text>
      </g>

      <g transform="translate(600 470) scale(.33333)" stroke="#000" stroke-width="7" fill="none">
        <use href="#sealring" x="144" y="90"/><use href="#sealring" x="367" y="90"/><use href="#sealring" x="587" y="90"/>
        <path d="M108 62h73M116 70h60M92 80h103M116 87h60M98 101h108M88 108h100M51 114h186M327 73h72M334 81h58M302 93h124M318 101h90M273 107h184M549 73h72M556 81h58M522 93h126M540 101h90M492 107h186"/>
        <use href="#sig" x="112" y="68"/><use href="#sig" x="333" y="66"/>
      </g>

      <g transform="translate(30 700) scale(.33333)" stroke="#000" stroke-width="8" fill="none">
        <path d="M36 109h86M36 121h129M88 165h123"/><path d="M36 103h222" stroke-width="3"/><path d="M218 151h29v28h-29z" fill="#c4c4c4" stroke-width="4"/>
        <path d="M549 61h505v193H549zM549 82h505M549 98h505M549 111h505M549 125h505M549 146h505M549 163h505M549 177h505M549 193h505M549 208h505M549 223h505M549 240h505M575 82v158M703 82v158M735 82v158M764 82v158M785 82v158M808 82v158M859 82v158M907 82v158M948 82v158M979 82v158M1028 82v172" stroke="#2d2d2d" stroke-width="3"/>
        <path d="M553 88h16M630 88h16M708 88h22M741 88h18M770 88h10M791 88h10M825 88h16M872 88h22M918 88h18M954 88h18M994 88h18M1035 88h12M602 103h74M625 119h26M622 133h30M626 140h24M616 156h44M609 170h60M609 184h60M590 214h97M740 245h98M708 103h21M708 119h21M708 133h21M708 140h21M708 156h21M708 170h21M708 184h21M741 103h18M741 119h18M741 133h18M741 140h18M741 156h18M741 170h18M741 184h18M770 103h10M770 119h10M770 133h10M770 156h10M770 170h10M770 184h10M792 103h10M792 119h10M792 133h10M792 156h10M792 170h10M792 184h10M816 103h36M816 119h36M816 133h36M816 140h36M816 156h36M816 170h36M816 184h36M873 103h20M873 119h20M873 133h20M873 140h20M866 156h34M873 170h20M873 184h20M918 103h18M918 119h18M918 133h18M918 140h18M918 156h18M918 170h18M918 184h18M959 103h10M959 119h10M959 133h10M959 156h10M959 170h10M959 184h10M997 103h12M997 119h12M993 133h22M998 140h10M993 156h22M997 170h12M997 184h12M1035 170h12M1035 184h12"/>
        <g fill="#ff1515" stroke="none"><circle cx="561" cy="106" r="7"/><circle cx="561" cy="139" r="7"/><circle cx="561" cy="157" r="7"/><circle cx="561" cy="187" r="7"/></g>
        <g stroke="#ff1515" stroke-width="3"><circle cx="561" cy="121" r="5"/><circle cx="561" cy="173" r="5" stroke-dasharray="4 3"/></g>
        <path d="M1076 61h153v112h-153zM1076 82h153" stroke="#2d2d2d" stroke-width="4"/>
        <path d="M1091 92h136M1091 111h136M1091 129h98" stroke="#ff1515" stroke-width="11" stroke-linecap="round" stroke-dasharray="1 17.500"/>
        <path d="M1084 147l12-8v16zM1102 147l12-8v16zM1120 147l12-8v16zM1138 147l12-8v16zM1156 147l12-8v16zM1174 147l12-8v16zM1192 147l12-8v16zM1210 147l12-8v16zM1082 159l12 8-12 8zM1104 159l-12 8 12 8zM1110 159l12 8-12 8zM1134 159l-12 8 12 8zM1138 154h16l-6 18h-10zM1160 167l10-8v16zM1180 167l10-8v16zM1198 167l10-8v16z" fill="#ff1515" stroke="none"/>
        <path d="M1038 243v8h6" stroke="#ddd" stroke-width="2"/>
      </g>
      <text x="42" y="734" class="t5 left">PARTIAL FIRE PROTECTION PLAN</text>
      <text x="297" y="726" class="t5">SPRINKLER SUMMARY</text>
      <text x="414" y="726" class="t5">HEAD BOX</text>
    </svg>

    <section class="command">
      <div class="cmdbar"><i></i><svg width="8" height="8"><path d="M1 1l6 6M7 1L1 7" stroke="#e4e4e4" stroke-width="2"/></svg><svg width="11" height="11" viewBox="0 0 11 11"><path d="M1 10l5-5" stroke="#e4e4e4" stroke-width="2"/><path d="M10 3a3 3 0 1 1-3-2" stroke="#e4e4e4" stroke-width="2" fill="none"/></svg></div>
      <div class="cmdmain">
        <p>Enter new value for CANNOSCALE &lt;"1/4" =<br>1'-0""&gt;: 1/8" = 1'-0"</p>
        <div class="cmdline"><svg width="11" height="9" viewBox="0 0 11 9"><path d="M.500.500h10v8H.500zM.500 2h10M2 4l2 1-2 1M5 7h3" fill="none" stroke="#666"/></svg><i class="caret"></i><input type="text" aria-label="Command" placeholder="Type a command"><i class="up"></i></div>
      </div>
    </section>
  </div>
</main>

<footer class="status">
  <svg width="12" height="10"><use href="#bars"/></svg>
  <span class="slash">/</span><a>Model</a><a class="sheet"><b>18X24</b></a><a>24X36</a><span class="slash">/</span><a class="plus">+</a><span class="slash">/</span>
  <div class="readouts">
    <output>515'-5 3/4", 82'-0 1/8", 0'-0"</output>
    <button class="st">MODEL</button>
    <div class="grp">
      <svg viewBox="0 0 12 12"><path d="M3 0v12M6 0v12M9 0v12M0 3h12M0 6h12M0 9h12"/></svg>
      <svg viewBox="0 0 12 12"><path d="M1 2h11M1 6h11M1 10h11" stroke-width="1.500" stroke-dasharray="2 2"/></svg><i class="caret"></i>
    </div>
    <div class="grp">
      <svg viewBox="0 0 12 12"><path d="M1 8h4v3H1zM5 8V1h6v4H6" stroke-width="1.500"/></svg>
      <svg class="act" viewBox="0 0 12 12"><path d="M0 3h6M3 0v6"/><path d="M5 7h7v4H5z" fill="#eee"/></svg>
      <svg class="act" viewBox="0 0 12 12"><path d="M1 0v11h11M1 6h5v5"/></svg>
      <svg viewBox="0 0 12 12"><circle cx="5" cy="6" r="4"/><path d="M5 6l6-4M5 6h7"/></svg><i class="caret"></i>
      <svg viewBox="0 0 12 12"><path d="M1 1l10 10" stroke="#e05a5a"/><path d="M5 0v12" stroke="#6cc36c"/><path d="M5 6l6 3"/></svg><i class="caret"></i>
      <svg viewBox="0 0 12 12"><path d="M1 11L11 1M1 11h11"/></svg>
      <svg class="act" viewBox="0 0 12 12"><path d="M2 2h9v9H2zM0 2h4M2 0v4" stroke-width="1.500"/></svg><i class="caret"></i>
      <svg viewBox="0 0 12 12"><path d="M0 2h12M0 6h12" stroke-width="1.500"/><path d="M0 10h12" stroke-width="3"/></svg>
      <svg class="act" viewBox="0 0 12 12"><path d="M0 1h12M0 5h12M0 9h12" stroke-width="2" stroke-dasharray="2 2"/><path d="M2 3h10M2 7h10M2 11h10" stroke-width="2" stroke-dasharray="2 2"/></svg>
      <svg viewBox="0 0 12 12"><path d="M1 1h6v6"/><path d="M4 4h8v8H4z" fill="#7fd58e" stroke="none"/></svg>
      <svg class="act" viewBox="0 0 12 12"><path d="M1 4h7v7H1zM1 4l3-3h7v7l-3 3M8 4l3-3"/></svg><i class="caret"></i>
    </div>
    <div class="grp">
      <svg viewBox="0 0 12 12"><path d="M2 1v9h9M0 3l2-2 2 2M9 8l2 2-2 2M6 6l4-4"/></svg>
      <svg viewBox="0 0 12 12"><path d="M2 4h7v6H2zM2 4l2-3h7v6l-2 3" stroke="#8fc4ee"/></svg><i class="caret"></i>
      <svg class="act" viewBox="0 0 12 12"><circle cx="6" cy="6" r="5"/><path d="M6 1v6M6 7l-4 3M6 7l4 3"/></svg><i class="caret"></i>
    </div>
    <div class="grp">
      <svg viewBox="0 0 12 12"><path d="M1 1h10v10H1z" stroke-dasharray="2 1"/><path d="M3 3l6 6M9 3l-6 6"/></svg>
      <svg viewBox="0 0 12 12"><path d="M1 11l5-10 3 10M3 7h6" stroke-width="2"/><circle cx="10" cy="2" r="1"/></svg>
      <svg viewBox="0 0 12 12"><path d="M1 11l5-10 3 10M3 7h6" stroke-width="2"/><path d="M11 0l-2 3h2l-1 3"/></svg>
      <svg viewBox="0 0 12 12"><path d="M2 5h8v6H2zM4 5V1h4v4M4 8h4"/></svg>
      <svg viewBox="0 0 12 12"><path d="M1 6h5v5H1zM3 1h8v8" stroke-dasharray="3 1"/></svg>
      <span class="scale">1/8" = 1'-0" /</span>
    </div>
    <button class="st last" aria-label="Customization"><svg viewBox="0 0 12 12"><path d="M0 2h12M0 6h12M0 10h12"/></svg></button>
  </div>
</footer>

<nav class="taskbar">
  <svg viewBox="0 0 16 16"><path fill="#3fb7f2" d="M0 0h7.500v7.500H0zM8.500 0H16v7.500H8.500zM0 8.500h7.500V16H0zM8.500 8.500H16V16H8.500z"/></svg>
  <svg viewBox="0 0 16 16"><path fill="#6b6b6b" d="M0 4h11v11H0z"/><path fill="#f1f1f1" d="M5 0h11v11H5z"/></svg>
  <span class="run"><svg viewBox="0 0 16 16"><path fill="#e6a51c" d="M0 1h6l2 2h8v12H0z"/><path fill="#ffd65a" d="M0 5h16v10H0z"/><path fill="#1c7fd4" d="M3 11h10v5H3z"/></svg></span>
  <span class="run"><svg viewBox="0 0 16 16"><circle cx="8" cy="8.500" r="7.500" fill="#ff7a18"/><path fill="#ffcf2e" d="M9 1q7 2 6.500 8-3 6-8 4 6-2 3-7z"/><circle cx="7.500" cy="9" r="4" fill="#8a3fd0"/><path d="M1 4q3 1 6 1l-2 3q3 3 6 1-2 5-7 3z" fill="#ff3f4f"/></svg></span>
  <span class="run"><svg viewBox="0 0 16 16"><circle cx="8" cy="8" r="8" fill="#e33b2e"/><path fill="#2da94f" d="M1 4l5 7 3 5A8 8 0 0 1 1 4z"/><path fill="#fdc413" d="M8 4.500h7.300A8 8 0 0 1 8.500 16l3-6z"/><circle cx="8" cy="8" r="4" fill="#fff"/><circle cx="8" cy="8" r="3" fill="#3b82f0"/></svg></span>
  <span class="run"><svg class="over" viewBox="0 0 16 16"><circle cx="9" cy="4" r="3" fill="#7b83eb"/><path fill="#5059c9" d="M5 6h11v5q-1 5-6 5-4-1-5-5z"/><path fill="#4048a8" d="M0 5h8v8H0z"/><path d="M2 7h4M4 7v5" stroke="#fff"/><circle cx="14" cy="1" r="5" fill="#29a329"/><path d="M11 1l2 2 4-4" stroke="#111" fill="none"/></svg></span>
  <svg viewBox="0 0 16 16"><rect width="16" height="16" rx="2" fill="#e4e4e4"/><path d="M16 3H5Q3 3 3 5v6q0 2 2 2h11" stroke="#252525" stroke-width="2" fill="none"/><circle cx="8.500" cy="8" r="3" fill="#e31f4f"/></svg>
  <span class="run"><svg viewBox="0 0 16 16"><circle cx="8" cy="8" r="7.500" fill="#1ed760"/><path d="M3.500 5.500q5-1.500 9.500 1M4 8.200q4-1.200 8 1M4.500 10.800q3.500-1 6.500.8" stroke="#111" stroke-width="1.400" fill="none"/></svg></span>
  <svg viewBox="0 0 16 16"><defs><linearGradient id="mx" x2="1" y2="1"><stop stop-color="#2b43e6"/><stop offset=".5" stop-color="#a92aa0"/><stop offset="1" stop-color="#f23a4e"/></linearGradient></defs><path fill="url(#mx)" d="M0 0h16v16H0z"/><path d="M4 11a5 5 0 1 1 8 0M6 10V7q2-2 4 0v3M8 7v6" stroke="#fff" fill="none"/></svg>
  <span class="run"><svg viewBox="0 0 16 16"><circle cx="8" cy="8" r="7.500" fill="#1b9fe4"/><path d="M5 15l2-9q4-4 6-1 0 4-5 4l5 4" stroke="#fff" stroke-width="2" fill="none"/></svg></span>
  <svg viewBox="0 0 16 16"><path fill="#28a8ea" d="M6 1h10v7H6z"/><path fill="#1267b4" d="M5 8h11v7H5z"/><path fill="#7fd0f7" d="M5 15l11-7v7z"/><path fill="#0f6cbd" d="M0 4h9v9H0z"/><circle cx="4.500" cy="8.500" r="2.500" stroke="#fff" stroke-width="1.500" fill="none"/></svg>
  <span class="run focus"><svg viewBox="0 0 16 16"><path fill="#c9271d" d="M0 0h16v16H0z"/><path fill="#f5f0ea" d="M16 1v15H5q-1-3 2-6-2-2 1-5 3-4 8-4z"/><path d="M7 6l4-2 2 4-4 2 3 5M9 12l3-1" stroke="#222" fill="none"/></svg></span>
  <svg viewBox="0 0 16 16"><rect x="2" width="12" height="16" rx="6" fill="#2f7ed8"/><path fill="#fff" d="M4 6q4-4 8 0v7q-4 4-8 0z"/><circle cx="6" cy="6" r="1.200" fill="#111"/><circle cx="10" cy="6" r="1.200" fill="#111"/><path fill="#f5a21a" d="M6 8h4l-2 2z"/></svg>
  <span class="run"><svg viewBox="0 0 16 16"><circle cx="8" cy="8" r="6" fill="#8e959d"/><circle cx="8" cy="8" r="7" fill="none" stroke="#8e959d" stroke-width="2" stroke-dasharray="3 2.500"/><circle cx="8" cy="8" r="3" fill="#2088e8" stroke="#dfe3e8"/></svg></span>
  <span class="run"><svg viewBox="0 0 16 16"><path fill="#3d3d3d" d="M0 2h16v13H0z"/><path fill="#aaa" d="M0 1h16v2H0z"/><path d="M2 6l3 3-3 3M7 12h5" stroke="#fff" stroke-width="1.500" fill="none"/></svg></span>
  <span class="run"><svg viewBox="0 0 16 16"><path d="M12 1L1 10M12 15L1 6" stroke="#1180d0" stroke-width="3"/><path fill="#37a8f0" d="M11 0l5 2v12l-5 2z"/></svg></span>
  <svg class="low" viewBox="0 0 16 16"><path fill="#f4f4f4" d="M0 0h12v14H0z"/><path d="M2 10V2h8" stroke="#e0492e" stroke-width="2" stroke-dasharray="2 1" fill="none"/><path d="M4 5h6v7H4z" fill="#ccc"/><circle cx="14" cy="9" r="2" stroke="#1878d4" fill="none" stroke-width="1.500"/></svg>
</nav>

<p class="callout c1">Pan so that your model is centered on the paper</p>
<p class="callout c2">If the paper is too small. Try again on a larger size</p>
<p class="callout c3">If the paper is too big. Try again on a smaller size</p>
</body>
</html>
```
FILE: styles.css
```css
* { box-sizing: border-box; }
html, body { height: 100%; }
body {
  margin: 0;
  display: flex;
  flex-direction: column;
  position: relative;
  overflow: hidden;
  background: #222933;
  color: #d6dae0;
  font: 8px/12px "Open Sans", "Noto Sans", sans-serif;
}
svg { flex: none; display: block; }
button, input, select { font: inherit; color: inherit; border: 0; background: none; padding: 0; margin: 0; }
a { color: inherit; text-decoration: none; white-space: nowrap; }
i { flex: none; }
.sprite { position: absolute; width: 0; height: 0; }
.caret { border: 2px solid transparent; border-top: 3px solid #c6cbd2; border-bottom: 0; width: 4px; height: 3px; }

.titlebar { flex: none; height: 24px; border-top: 2px solid #0f86b8; display: flex; align-items: center; padding: 0 7px; }
.applogo { width: 16px; height: 16px; background: #e01f4f; color: #fff; font-weight: 700; font-size: 11px; line-height: 14px; margin-right: 4px; }
.quick { display: flex; align-items: center; gap: 5px; margin-left: 7px; }
.share { display: flex; align-items: center; gap: 3px; color: #7cc0ea; margin-left: 4px; }
.titlebar h1 { font: inherit; margin: 0 0 0 17px; white-space: nowrap; color: #e2e5e9; }
.titlebar h1 span { margin-left: 4px; }
.play { border: 3px solid transparent; border-left: 4px solid #c6cbd2; border-right: 0; margin-left: auto; }
.search { flex: 0 1 120px; min-width: 0; height: 15px; background: #3b4350; margin: 0 4px; padding: 0 1px; }
.search::placeholder { color: #a3a9b3; font-style: italic; opacity: 1; }
.user { display: flex; align-items: center; gap: 3px; margin: 0 32px 0 5px; }
.help { display: flex; align-items: center; gap: 5px; margin-left: 9px; }
.rule { width: 1px; height: 16px; background: #4a525f; }
.round { width: 11px; height: 11px; border-radius: 50%; background: #d5d9de; color: #222933; font-weight: 700; line-height: 11px; }
.winbtns { display: flex; gap: 24px; margin-left: 53px; }
.winbtns.inner { gap: 14px; margin-left: auto; }

.menubar { flex: none; height: 13px; display: flex; align-items: center; padding: 0 5px 0 9px; color: #c0c5cd; }
.menu { display: flex; gap: 15px; }
.tabs { flex: none; height: 16px; display: flex; align-items: flex-end; gap: 2px; padding-left: 4px; border-top: 1px solid #303845; }
.tabs a { padding: 0 5px; line-height: 14px; }
.tabs .on { background: #3b4453; color: #fff; }
.tabs .ctx { background: #0c6491; color: #fff; padding: 0 6px; }
.tabs .mini { width: 11px; height: 6px; background: #e2e5e9; margin: 0 0 4px 14px; }
.tabs .caret { margin-bottom: 5px; }

.ribbon { flex: none; display: flex; height: 81px; background: #3b4453; }
.panel { flex: none; padding: 2px 0 0 5px; border-right: 1px solid #2a313d; position: relative; display: flex; flex-direction: column; }
.panel h2 { margin: 0 0 0 -5px; font: inherit; line-height: 15px; display: flex; justify-content: center; align-items: center; gap: 5px; }
.cols { display: grid; height: 64px; }
.p1 { width: 256px; } .p1 .cols { grid-template-columns: 48px 77px 71px 1fr; }
.p2 { width: 161px; } .p2 .cols { grid-template-columns: 66px 64px 1fr; }
.p3 { width: 52px; } .p3 .cols { grid-template-columns: 23px 1fr; }
.p4 { width: 184px; } .p4 .cols { grid-template-columns: 74px 24px 1fr; }
.p5 { width: 93px; } .p5 .cols { grid-template-columns: 26px 1fr; }
.p6 { width: 53px; } .p6 .cols { grid-template-columns: 25px 1fr; }
.p7 { flex: 1; border: 0; } .p7 .cols { padding-left: 11px; } .p7 h2 { justify-content: flex-start; padding-left: 4px; }
.col { min-width: 0; }
.tool { display: flex; align-items: center; gap: 3px; height: 16px; white-space: nowrap; color: #e2e5e9; }
.tool svg { width: 12px; height: 12px; }
.tool .caret { margin-left: 2px; }
.tool.wide { gap: 4px; }
.tool.inset { padding-left: 15px; }
.tool.big { height: 24px; gap: 2px; }
.tool.big svg { width: 22px; height: 22px; }
.tool text { fill: #fff; font-size: 7px; font-weight: 700; }

.filetabs { flex: none; height: 20px; display: flex; align-items: center; gap: 8px; padding-left: 10px; color: #59616d; }
.toolrow { flex: none; height: 18px; margin-bottom: 1px; background: #3b4453; display: flex; align-items: center; gap: 4px; padding-left: 2px; }
.grip { width: 2px; height: 10px; border-left: 2px dotted #aab0b8; }
.layerbox { background: #fff; height: 15px; width: 478px; }
.pick { display: flex; align-items: center; width: 81px; height: 15px; background: #fff; color: #222; position: relative; border: 1px solid #aeb4bc; }
.pick.line { width: 74px; }
.pick select { flex: 1; min-width: 0; appearance: none; padding-left: 5px; }
.pick span { width: 16px; border-top: 1px solid #111; }
.pick::after { content: ""; width: 4px; height: 4px; border: solid #555; border-width: 0 1px 1px 0; transform: rotate(45deg); margin: 0 4px 2px 0; }
.pick.off { color: #888; }
.q { width: 12px; height: 12px; background: #164a80; color: #fff; text-align: center; font-weight: 700; }

.work { flex: 1; min-height: 0; display: flex; }
.palettes { width: 17px; flex: none; display: flex; flex-direction: column; gap: 3px; padding: 2px 1px 0 0; }
.palette { flex: 1; background: #3b4453; display: flex; flex-direction: column; align-items: center; justify-content: center; position: relative; }
.palette span { writing-mode: vertical-rl; transform: rotate(180deg); white-space: nowrap; color: #c9ced6; line-height: 12px; }
.dots { position: absolute; top: 3px; width: 6px; height: 4px; border: dotted #9aa1ab; border-width: 1px 0; }
.canvas { flex: 1; min-width: 0; position: relative; overflow: hidden; background: #8a8a8a; }
.shade { fill: #7a7a7a; }
.drawing text { font-family: "Liberation Sans", sans-serif; fill: #222; text-anchor: middle; }
.drawing .brand { font-size: 9px; font-weight: 700; text-anchor: start; }
.drawing .t8 { font-size: 7px; }
.drawing .t11 { font-size: 10px; }
.drawing .t5 { font-size: 4px; font-weight: 700; fill: #000; }
.drawing .left { text-anchor: start; }

.command { position: absolute; left: 295px; bottom: 1px; width: 253px; display: flex; border: 1px solid #5b616c; background: #dcdcdc; }
.cmdbar { width: 13px; background: #4b515d; display: flex; flex-direction: column; align-items: center; justify-content: space-between; padding: 2px 0 1px; }
.cmdbar i { width: 11px; height: 4px; border: dotted #d5d9de; border-width: 1px 0; }
.cmdmain { flex: 1; font-family: "Liberation Mono", monospace; color: #222; }
.cmdmain p { margin: 0; background: #b4b4b4; padding: 3px 4px 2px; font-size: 8px; line-height: 10px; border-bottom: 1px solid #4b515d; }
.cmdline { display: flex; align-items: center; gap: 3px; height: 13px; padding: 0 3px 0 2px; }
.cmdline input { flex: 1; min-width: 0; padding-left: 3px; }
.cmdline input::placeholder { color: #777; font-style: italic; opacity: 1; }
.cmdline .caret { border-top-color: #666; }
.up { border: 2px solid transparent; border-bottom: 3px solid #555; border-top: 0; }

.status { flex: none; height: 26px; border-top: 3px solid #3b4453; border-bottom: 2px solid #17526e; display: flex; align-items: center; padding-left: 10px; }
.slash { color: #4f5765; font-size: 11px; margin: 0 6px; }
.status .sheet { background: #3b4453; color: #fff; padding: 2px 9px 3px; margin: 0 9px 0 8px; transform: skewX(-20deg); }
.status .sheet b { display: block; transform: skewX(20deg); }
.status .plus { font-size: 16px; font-weight: 300; color: #fff; }
.readouts { margin-left: auto; display: flex; gap: 2px; height: 17px; color: #e6e8ec; }
.readouts output, .st, .grp { background: #3b4453; display: flex; align-items: center; white-space: nowrap; }
.readouts output { padding: 0 3px 0 14px; }
.st { padding: 0 2px; }
.grp { gap: 3px; padding: 0 1px; }
.readouts .caret { margin: 0 1px 0 2px; }
.readouts svg { width: 14px; height: 15px; padding: 1px; fill: none; stroke: #d5d9de; stroke-width: 1; }
.readouts .act { background: #5a8cc4; stroke: #fff; }
.readouts .last { padding: 0; }
.scale { padding: 0 0 0 2px; }

.taskbar { flex: none; height: 28px; background: #000; display: flex; gap: 14px; padding: 8px 11px 0; }
.taskbar svg { width: 16px; height: 16px; }
.taskbar .over { overflow: visible; }
.run { width: 16px; height: 20px; display: flex; flex-direction: column; align-items: center; justify-content: space-between; }
.run::after { content: ""; width: 4px; height: 1px; background: #999; }
.focus { box-shadow: 0 0 0 5px #1c1c1c; background: #1c1c1c; }
.focus::after { width: 8px; height: 2px; background: #6fb6d8; }
.taskbar .low { margin-top: 6px; }

.callout { position: absolute; margin: 0; width: 474px; height: 96px; border: 5px solid #f00; background: #fff; color: #f00; font: 35px/40px "Liberation Sans", Arial, sans-serif; padding: 1px 6px; }
.c1 { left: 32px; top: 112px; }
.c2 { left: 30px; top: 218px; }
.c3 { left: 36px; top: 322px; }
```
